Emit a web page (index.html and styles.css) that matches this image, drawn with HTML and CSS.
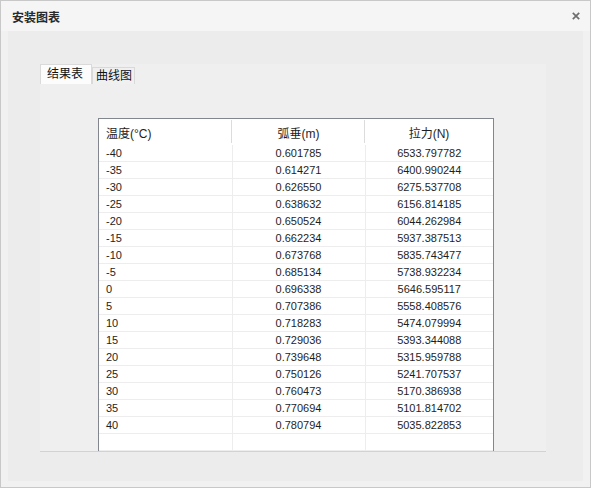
FILE: index.html
```html
<!DOCTYPE html>
<html lang="zh-CN">
<head>
  <meta charset="UTF-8">
  <title>安装图表</title>
  <link rel="stylesheet" href="styles.css">
</head>
<body>
  <div class="window">
    <div class="titlebar">
      <span class="title">安装图表</span>
      <svg class="close" width="8" height="8" viewBox="0 0 8 8">
        <path d="M0.8 0.8 L7.2 7.2 M7.2 0.8 L0.8 7.2" stroke="#6e6e6e" stroke-width="1.7" fill="none"/>
      </svg>
    </div>
    <div class="client">
      <div class="panel">
        <div class="tab-widget">
          <div class="tab-bar">
            <div class="tab active">结果表</div>
            <div class="tab">曲线图</div>
          </div>
          <div class="tab-pane">
            <div class="grid-box">
              <table class="result">
                <colgroup>
                  <col class="c1"><col class="c2"><col>
                </colgroup>
                <thead>
                  <tr><th class="left">温度(°C)</th><th>弧垂(m)</th><th>拉力(N)</th></tr>
                </thead>
                <tbody id="rows"></tbody>
              </table>
            </div>
          </div>
        </div>
      </div>
    </div>
  </div>

  <script>
    const data = [
      [-40, "0.601785", "6533.797782"],
      [-35, "0.614271", "6400.990244"],
      [-30, "0.626550", "6275.537708"],
      [-25, "0.638632", "6156.814185"],
      [-20, "0.650524", "6044.262984"],
      [-15, "0.662234", "5937.387513"],
      [-10, "0.673768", "5835.743477"],
      [-5, "0.685134", "5738.932234"],
      [0, "0.696338", "5646.595117"],
      [5, "0.707386", "5558.408576"],
      [10, "0.718283", "5474.079994"],
      [15, "0.729036", "5393.344088"],
      [20, "0.739648", "5315.959788"],
      [25, "0.750126", "5241.707537"],
      [30, "0.760473", "5170.386938"],
      [35, "0.770694", "5101.814702"],
      [40, "0.780794", "5035.822853"]
    ];
    const tbody = document.getElementById("rows");
    data.concat([["", "", ""]]).forEach(row => {
      const tr = document.createElement("tr");
      tr.innerHTML = `<td class="left">${row[0]}</td><td>${row[1]}</td><td>${row[2]}</td>`;
      tbody.appendChild(tr);
    });
  </script>
</body>
</html>
```

FILE: styles.css
```css
body {
  margin: 0;
  font-family: "Liberation Sans", "Noto Sans CJK SC", sans-serif;
  color: #1e1e1e;
}

.window {
  width: 591px;
  height: 488px;
  box-sizing: border-box;
  border: 1px solid #c8c8c8;
  background: #f1f1f1;
  display: flex;
  flex-direction: column;
}

.titlebar {
  height: 30px;
  flex: none;
  background: #f5f5f5;
  display: flex;
  align-items: center;
  justify-content: space-between;
  padding: 0 10px 0 11px;
}

.title {
  font-size: 12px;
  color: #2a2a2a;
  font-weight: 600;
}

.close {
  margin-top: -1px;
}

.client {
  flex: 1;
  display: flex;
  padding: 0 7px 6px 7px;
}

.panel {
  flex: 1;
  background: #ececec;
  padding: 33px 35px 0 32px;
}

.tab-widget {
  background: #efefef;
  height: 387px;
  display: flex;
  flex-direction: column;
  border-bottom: 1px solid #d2d2d2;
  margin-right: 2px;
}

.tab-bar {
  height: 20px;
  display: flex;
  align-items: flex-end;
  flex: none;
}

.tab {
  font-size: 12px;
  height: 16px;
  line-height: 16px;
  padding: 0 2px 0 3px;
  background: #f0f0f0;
  border: 1px solid #d9d9d9;
  border-bottom: none;
  color: #111;
}

.tab.active {
  height: 19px;
  line-height: 18px;
  padding: 0 8px 0 6px;
  background: #fcfcfc;
  border-color: #dadada;
}

.tab-pane {
  flex: 1;
  padding: 34px 0 0 58px;
  overflow: hidden;
}

.grid-box {
  width: 394px;
  height: 340px;
  background: #fff;
  border: 1px solid #82878f;
  border-bottom: none;
  overflow: hidden;
}

.result {
  width: 100%;
  table-layout: fixed;
  border-collapse: collapse;
}

.result col.c1,
.result col.c2 {
  width: 133px;
}

.result th {
  height: 26px;
  font-size: 12px;
  font-weight: normal;
  text-align: center;
  padding: 0 7px;
  position: relative;
}

.result th:not(:last-child)::after {
  content: "";
  position: absolute;
  right: 0;
  top: 1px;
  bottom: 2px;
  width: 1px;
  background: #dcdcdc;
}

.result td {
  height: 16px;
  font-size: 11px;
  text-align: center;
  padding: 0 7px;
  border-bottom: 1px solid #ededed;
  border-right: 1px solid #ededed;
  white-space: nowrap;
}

.result td:last-child {
  border-right: none;
}

.result .left {
  text-align: left;
}
```
